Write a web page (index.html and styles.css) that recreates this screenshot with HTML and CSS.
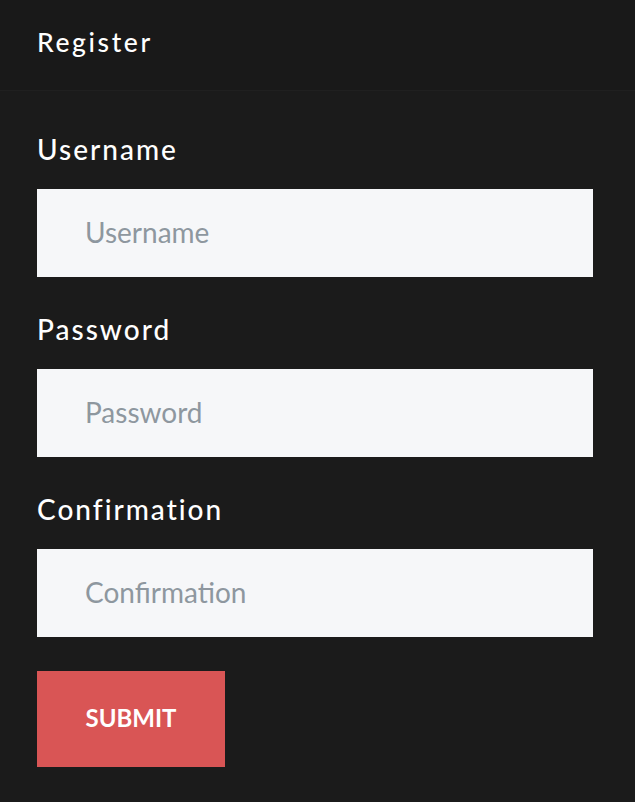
FILE: index.html
```html
<!DOCTYPE html>
<html lang="en">
<head>
<meta charset="utf-8">
<title>Register</title>
<link rel="stylesheet" href="styles.css">
</head>
<body>
<header class="topbar">
  <h1 class="title">Register</h1>
</header>
<form class="form">
  <div class="field">
    <label class="label" for="u">Username</label>
    <input class="input" id="u" type="text" placeholder="Username">
  </div>
  <div class="field">
    <label class="label" for="p">Password</label>
    <input class="input" id="p" type="password" placeholder="Password">
  </div>
  <div class="field">
    <label class="label" for="c">Confirmation</label>
    <input class="input" id="c" type="password" placeholder="Confirmation">
  </div>
  <button class="submit" type="button">SUBMIT</button>
</form>
</body>
</html>
```
FILE: styles.css
```css
html, body {
  margin: 0;
  padding: 0;
  background: #1b1b1b;
  font-family: Lato, "Noto Sans", sans-serif;
}
.topbar {
  box-sizing: border-box;
  height: 91px;
  display: flex;
  align-items: center;
  padding: 0 37px 6px;
  background: #191919;
  border-bottom: 1px solid #202020;
}
.title {
  margin: 0;
  color: #ffffff;
  font-size: 26.5px;
  font-weight: 500;
  letter-spacing: 2.6px;
}
.form {
  padding: 39px 37px 0;
  display: flex;
  flex-direction: column;
}
.field {
  display: flex;
  flex-direction: column;
  margin-bottom: 33px;
}
.label {
  color: #ffffff;
  font-size: 28px;
  line-height: 38px;
  letter-spacing: 2px;
  font-weight: 500;
  margin-bottom: 21px;
}
.input {
  box-sizing: border-box;
  width: 556px;
  height: 88px;
  border: none;
  outline: none;
  background: #f6f7f9;
  padding: 0 48px 2px;
  font-family: inherit;
  font-size: 28px;
  color: #333;
}
.input::placeholder {
  color: #8e979f;
}
.submit {
  align-self: flex-start;
  width: 188px;
  height: 96px;
  margin-top: 1px;
  border: none;
  background: #d95555;
  color: #ffffff;
  font-family: inherit;
  font-size: 24px;
  font-weight: 700;
  padding: 0 0 3px;
}
```
